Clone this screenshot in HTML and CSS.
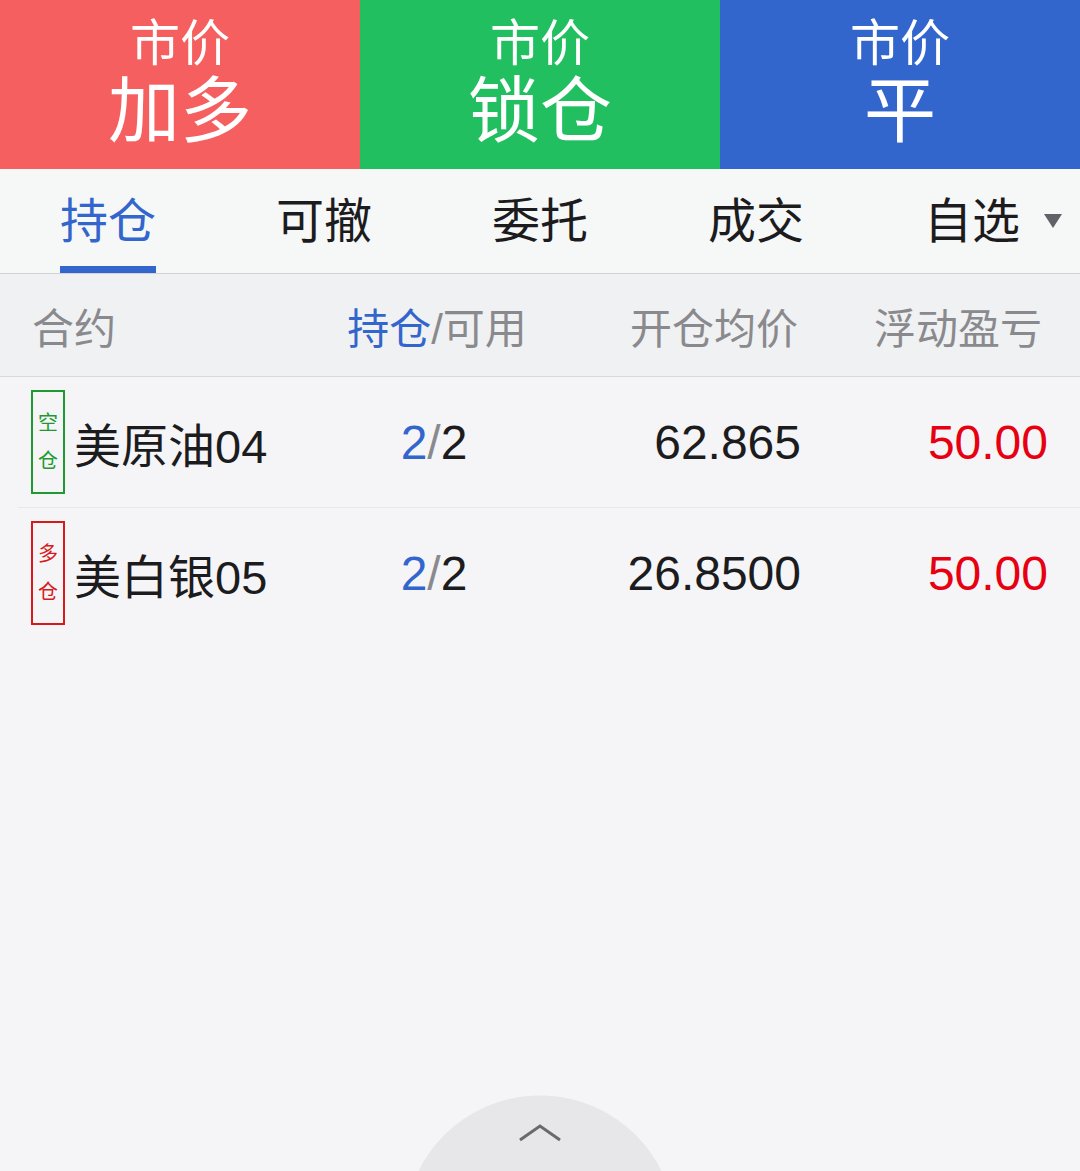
FILE: index.html
```html
<!DOCTYPE html>
<html>
<head>
    <meta charset="utf-8" />
    <title>持仓</title>
    <link rel="stylesheet" href="styles.css">
</head>
<body>
<div class="actions">
    <div class="act act-red"><span class="act-sub">市价</span><span class="act-main">加多</span></div>
    <div class="act act-green"><span class="act-sub">市价</span><span class="act-main">锁仓</span></div>
    <div class="act act-blue"><span class="act-sub">市价</span><span class="act-main">平</span></div>
</div>
<div class="tabs">
    <div class="tab active"><span>持仓</span></div>
    <div class="tab"><span>可撤</span></div>
    <div class="tab"><span>委托</span></div>
    <div class="tab"><span>成交</span></div>
    <div class="tab tab-drop"><span>自选</span></div>
</div>
<div class="thead">
    <div class="c1">合约</div>
    <div class="c2"><span class="blue">持仓</span>/可用</div>
    <div class="c3">开仓均价</div>
    <div class="c4">浮动盈亏</div>
</div>
<div class="list">
    <div class="row">
        <div class="c1"><span class="tag tag-short">空<br>仓</span>美原油04</div>
        <div class="c2"><span class="blue">2</span><span class="slash">/</span>2</div>
        <div class="c3">62.865</div>
        <div class="c4 red">50.00</div>
    </div>
    <div class="row">
        <div class="c1"><span class="tag tag-long">多<br>仓</span>美白银05</div>
        <div class="c2"><span class="blue">2</span><span class="slash">/</span>2</div>
        <div class="c3">26.8500</div>
        <div class="c4 red">50.00</div>
    </div>
</div>
<div class="pull">
    <svg width="44" height="20" viewBox="0 0 44 20"><path d="M2 17 L22 3 L42 17" fill="none" stroke="#6a6a6c" stroke-width="3"/></svg>
</div>
</body>
</html>
```

FILE: styles.css
```css
body{
    margin: 0px;
    background: #f5f5f7;
    font-family: "Liberation Sans", "Noto Sans CJK SC", sans-serif;
    color: #1c1c1e;
    height: 1171px;
    overflow: hidden;
    position: relative;
}
.actions{
    display: flex;
    height: 169px;
}
.act{
    flex: 1;
    display: flex;
    flex-direction: column;
    align-items: center;
    padding-top: 18px;
    box-sizing: border-box;
    color: #fff;
}
.act-red{ background: #f65f5f; }
.act-green{ background: #21bf60; }
.act-blue{ background: #3366cc; }
.act-sub{
    font-size: 50px;
    line-height: 52px;
}
.act-main{
    font-size: 72px;
    line-height: 78px;
    margin-top: 2px;
}
.tabs{
    display: flex;
    height: 104px;
    background: #f6f7f7;
    border-bottom: 1px solid #d3d3d7;
}
.tab{
    flex: 1;
    display: flex;
    justify-content: center;
    font-size: 48px;
    color: #1c1c1e;
    position: relative;
}
.tab span{
    display: block;
    padding-top: 27px;
    height: 70px;
    line-height: 52px;
}
.tab.active{
    color: #3366cc;
}
.tab.active span{
    border-bottom: 7px solid #3366cc;
}
.tab-drop::after{
    content: "";
    position: absolute;
    right: 18px;
    top: 45px;
    border-left: 9px solid transparent;
    border-right: 9px solid transparent;
    border-top: 14px solid #5f6266;
}
.thead{
    display: grid;
    grid-template-columns: 300px 210px 256px 244px;
    padding-left: 32px;
    height: 102px;
    align-items: center;
    background: #f0f1f2;
    border-bottom: 1px solid #d9d9dc;
    font-size: 42px;
    color: #8a8a8e;
}
.blue{ color: #3366cc; }
.red{ color: #e60012; }
.c2{ text-align: center; }
.c3, .c4{ text-align: right; }
.list{
    padding-left: 18px;
}
.row{
    display: grid;
    grid-template-columns: 298px 210px 262px 247px;
    padding-left: 13px;
    height: 130px;
    align-items: center;
    font-size: 48px;
}
.row + .row{
    border-top: 1px solid #e8e8ea;
}
.row .c1{
    display: flex;
    align-items: center;
    font-size: 47px;
}
.slash{
    color: #8a8a8e;
}
.tag{
    display: flex;
    flex-direction: column;
    align-items: center;
    justify-content: center;
    box-sizing: border-box;
    width: 34px;
    height: 104px;
    margin-right: 9px;
    font-size: 20px;
    line-height: 38px;
}
.tag-short{
    border: 2px solid #1f9a31;
    color: #1f9a31;
}
.tag-long{
    border: 2px solid #d7191c;
    color: #d7191c;
}
.pull{
    position: absolute;
    left: 404px;
    bottom: 0px;
    width: 272px;
    height: 76px;
    background: radial-gradient(circle at 136px 136px, #e7e7e9 135px, transparent 136px);
    display: flex;
    justify-content: center;
    padding-top: 28px;
    box-sizing: border-box;
}
```
